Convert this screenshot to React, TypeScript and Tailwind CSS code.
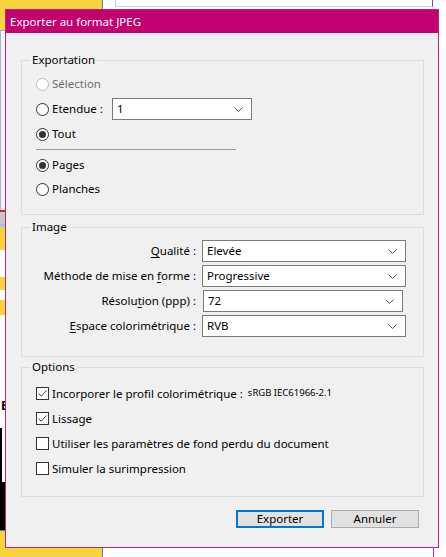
import React from "react";

const FONT = "font-['Segoe_UI','Noto_Sans','Open_Sans',sans-serif]";

function Chevron() {
  return (
    <svg width="9" height="5" viewBox="0 0 9 5" className="shrink-0">
      <path d="M0.5 0.5 L4.5 4.5 L8.5 0.5" fill="none" stroke="#505050" strokeWidth="1" />
    </svg>
  );
}

function Select({ value, className = "" }: { value: string; className?: string }) {
  return (
    <div
      className={`flex h-[22px] items-center justify-between border border-[#7a7a7a] bg-white pl-[4px] pr-[8px] ${className}`}
    >
      <span>{value}</span>
      <Chevron />
    </div>
  );
}

function Radio({ checked = false, disabled = false }: { checked?: boolean; disabled?: boolean }) {
  return (
    <span
      className={`flex h-[13px] w-[13px] shrink-0 items-center justify-center rounded-full border bg-white ${
        disabled ? "border-[#bcbcbc]" : "border-[#333333]"
      }`}
    >
      {checked && <span className="h-[7px] w-[7px] rounded-full bg-[#333333]" />}
    </span>
  );
}

function Checkbox({ checked = false }: { checked?: boolean }) {
  return (
    <span className="flex h-[13px] w-[13px] shrink-0 items-center justify-center border border-[#333333] bg-white">
      {checked && (
        <svg width="11" height="11" viewBox="0 0 11 11">
          <path d="M1.5 5.5 L4.2 8.2 L9.5 2.5" fill="none" stroke="#444444" strokeWidth="1" />
        </svg>
      )}
    </span>
  );
}

function Group({
  title,
  className = "",
  children,
}: {
  title: string;
  className?: string;
  children: React.ReactNode;
}) {
  return (
    <fieldset className={`ml-[15px] w-[403px] border border-[#dcdcdc] p-0 ${className}`}>
      <legend className="ml-[8px] px-[2px] leading-[16px]">{title}</legend>
      {children}
    </fieldset>
  );
}

function Row({ children, className = "" }: { children: React.ReactNode; className?: string }) {
  return <div className={`flex items-center gap-[3px] ${className}`}>{children}</div>;
}

function Label({ text, u, at }: { text: string; u: string; at: number }) {
  return (
    <span>
      {text.slice(0, at)}
      <span className="underline underline-offset-2">{u}</span>
      {text.slice(at + u.length)}
    </span>
  );
}

function Backdrop() {
  return (
    <>
      {/* desktop / document behind the dialog */}
      <div className="absolute left-0 top-0 h-[30px] w-[103px] border-r border-[#4a7fc1] bg-[#f6d43e]" />
      <div className="absolute left-[115px] top-[-1px] h-[8px] w-[318px] border-b border-l border-r border-b-[#c9d3e3] border-l-[#b8c6dd] border-r-[#9b36c8] bg-white" />
      <div className="absolute left-0 top-[30px] flex w-[5px] flex-col">
        <div className="h-[180px] border-l border-t border-[#9fb4d6] bg-[#f4f5f9]" />
        <div className="h-[2px] bg-[#d3282c]" />
        <div className="h-[12px] bg-[#c8c8cc]" />
        <div className="h-[3px] bg-[#a8c4e6]" />
        <div className="h-[23px] bg-[#f6d43e]" />
        <div className="h-[27px] bg-white" />
        <div className="h-[13px] bg-[#f6d43e]" />
        <div className="h-[10px] bg-white" />
        <div className="h-[15px] bg-[#f6d43e]" />
        <div className="h-[85px] bg-white" />
        <div className="h-[12px] bg-white pl-[1px] text-[12px] font-bold leading-[12px] text-black">E</div>
        <div className="h-[16px] bg-white" />
        <div className="h-[54px] border-l-2 border-black bg-white" />
        <div className="h-[48px] bg-black" />
        <div className="h-[1px] bg-[#4a7fc1]" />
      </div>
      <div className="absolute left-0 top-[531px] h-[26px] w-[103px] border-r border-[#4a7fc1] bg-[#f6d43e]" />
      <div className="absolute left-[433px] top-[547px] h-[10px] w-[1px] bg-[#9b36c8]" />
    </>
  );
}

export default function App() {
  return (
    <div className={`relative h-[557px] w-[446px] overflow-hidden bg-white text-[11.5px] text-black ${FONT}`}>
      <Backdrop />

      {/* dialog window */}
      <div className="absolute left-[5px] top-[9px] flex h-[539px] w-[434px] flex-col border border-[#b8237d] bg-[#f0f0f0]">
        <div className="flex h-[23px] items-center bg-[#c2006f] pl-[4px] text-[11.5px] text-white">
          Exporter au format JPEG
        </div>

        <Group title="Exportation" className="mt-[19px] pb-[13px]">
          <div className="flex flex-col pl-[14px] pt-[4px]">
            <Row className="h-[24px] text-[#6d6d6d]">
              <Radio disabled />
              <span>Sélection</span>
            </Row>
            <Row className="h-[26px]">
              <Radio />
              <span className="w-[57px] shrink-0">Etendue :</span>
              <Select value="1" className="w-[140px]" />
            </Row>
            <Row className="h-[24px]">
              <Radio checked />
              <span>Tout</span>
            </Row>
            <div className="mt-[3px] h-px w-[200px] bg-[#a0a0a0]" />
            <Row className="mt-[3px] h-[24px]">
              <Radio checked />
              <span>Pages</span>
            </Row>
            <Row className="h-[24px]">
              <Radio />
              <span>Planches</span>
            </Row>
          </div>
        </Group>

        <Group title="Image" className="mt-[4px] pb-[19px]">
          <div className="flex flex-col gap-[3px] pt-[5px]">
            <div className="flex items-center">
              <span className="w-[174px] text-right">
                <Label text="Qualité :" u="Q" at={0} />
              </span>
              <Select value="Elevée" className="ml-[6px] w-[204px]" />
            </div>
            <div className="flex items-center">
              <span className="w-[174px] text-right">
                <Label text="Méthode de mise en forme :" u="f" at={19} />
              </span>
              <Select value="Progressive" className="ml-[6px] w-[204px]" />
            </div>
            <div className="flex items-center">
              <span className="w-[174px] text-right">
                <Label text="Résolution (ppp) :" u="t" at={6} />
              </span>
              <Select value="72" className="ml-[7px] w-[200px]" />
            </div>
            <div className="flex items-center">
              <span className="w-[174px] text-right">
                <Label text="Espace colorimétrique :" u="E" at={0} />
              </span>
              <Select value="RVB" className="ml-[6px] w-[204px]" />
            </div>
          </div>
        </Group>

        <Group title="Options" className="mt-[2px] pb-[15px]">
          <div className="flex flex-col pl-[14px] pt-[6px]">
            <Row className="h-[25px]">
              <Checkbox checked />
              <span>Incorporer le profil colorimétrique :</span>
              <span className="ml-[2px] text-[9.5px]">sRGB IEC61966-2.1</span>
            </Row>
            <Row className="h-[25px]">
              <Checkbox checked />
              <span>Lissage</span>
            </Row>
            <Row className="h-[25px]">
              <Checkbox />
              <span>Utiliser les paramètres de fond perdu du document</span>
            </Row>
            <Row className="h-[25px]">
              <Checkbox />
              <span>Simuler la surimpression</span>
            </Row>
          </div>
        </Group>

        <div className="mr-[19px] mt-[13px] flex justify-end gap-[7px]">
          <button className="flex h-[18px] w-[88px] items-center justify-center border-2 border-[#0078d7] bg-[#e1e1e1]">
            Exporter
          </button>
          <button className="flex h-[18px] w-[88px] items-center justify-center border border-[#adadad] bg-[#e1e1e1]">
            Annuler
          </button>
        </div>
      </div>
    </div>
  );
}
